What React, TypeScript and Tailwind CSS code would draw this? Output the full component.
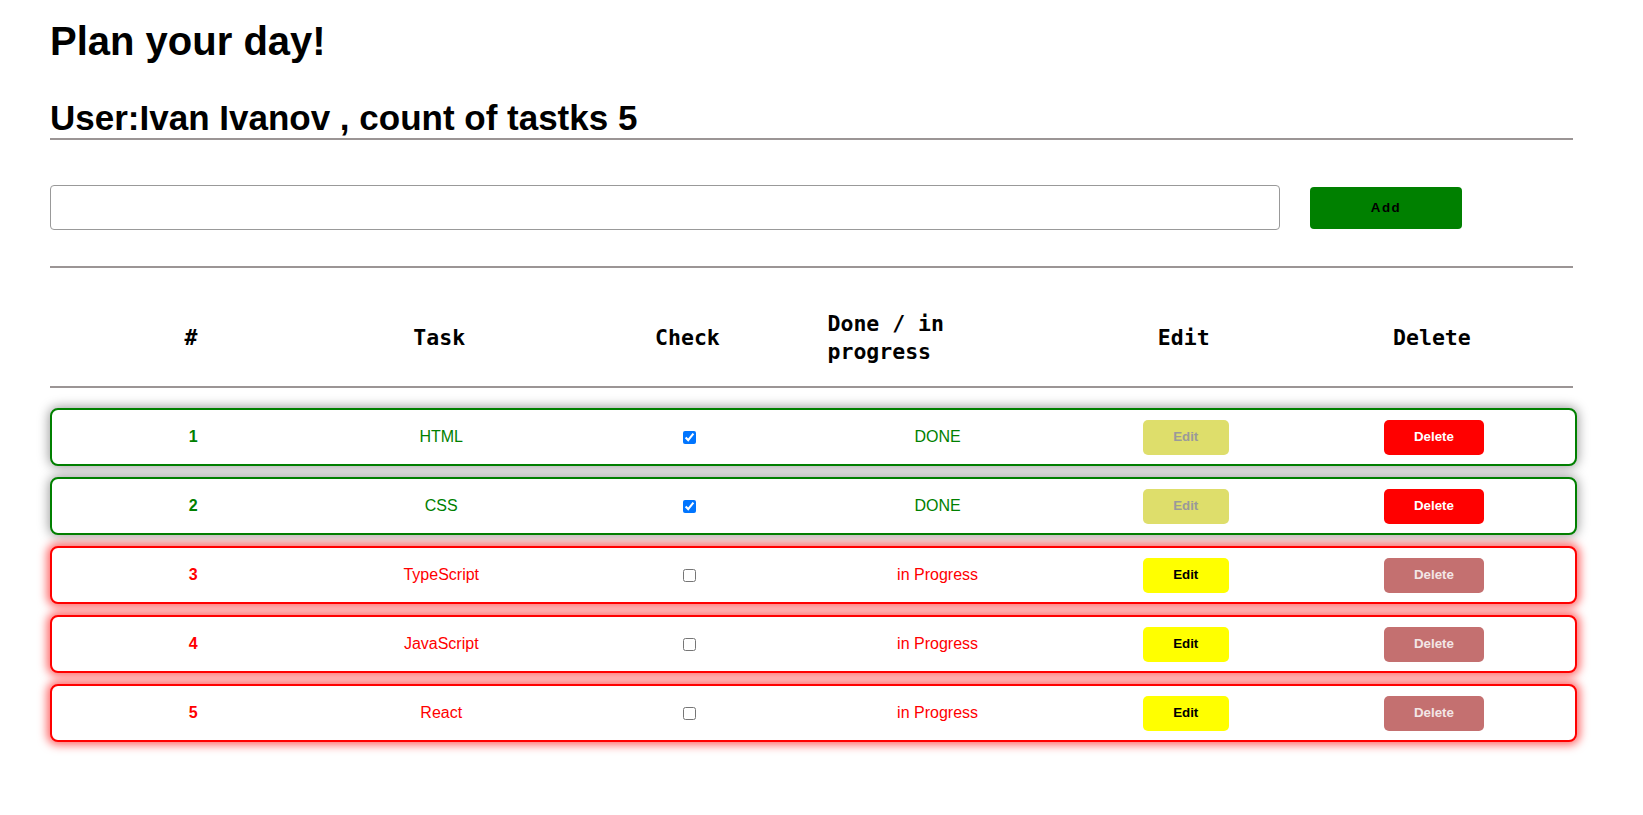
import { useState } from 'react';

type Task = { id: number; title: string; done: boolean };

const initialTasks: Task[] = [
  { id: 1, title: 'HTML', done: true },
  { id: 2, title: 'CSS', done: true },
  { id: 3, title: 'TypeScript', done: false },
  { id: 4, title: 'JavaScript', done: false },
  { id: 5, title: 'React', done: false },
];

function TaskRow({ task, onToggle }: { task: Task; onToggle: () => void }) {
  const done = task.done;
  return (
    <div
      className={
        done
          ? 'grid grid-cols-6 items-center w-[1527px] h-[58px] pl-[17px] pr-[17px] bg-white rounded-lg border-2 border-[#008000] text-[#008000] shadow-[0_0_12px_1px_rgba(0,0,0,0.4)]'
          : 'grid grid-cols-6 items-center w-[1527px] h-[58px] pl-[17px] pr-[17px] bg-white rounded-lg border-2 border-[#ff0000] text-[#ff0000] shadow-[0_0_10px_3px_rgba(255,0,0,0.6)]'
      }
    >
      <div className="text-center text-[16px] font-bold">{task.id}</div>
      <div className="text-center text-[16px]">{task.title}</div>
      <div className="flex justify-center">
        <input type="checkbox" checked={done} onChange={onToggle} className="w-[13px] h-[13px] m-0" />
      </div>
      <div className="text-center text-[16px]">{done ? 'DONE' : 'in Progress'}</div>
      <div className="flex justify-center">
        <button
          disabled={done}
          className={
            done
              ? 'w-[86px] h-[35px] rounded-[5px] bg-[#dede6b] text-[#9a9a9a] text-[13.33px] font-bold'
              : 'w-[86px] h-[35px] rounded-[5px] bg-[#ffff00] text-black text-[13.33px] font-bold'
          }
        >
          Edit
        </button>
      </div>
      <div className="flex justify-center">
        <button
          disabled={!done}
          className={
            done
              ? 'w-[100px] h-[35px] rounded-[5px] bg-[#ff0000] text-white text-[13.33px] font-bold'
              : 'w-[100px] h-[35px] rounded-[5px] bg-[#c47070] text-[#f3e6e6] text-[13.33px] font-bold'
          }
        >
          Delete
        </button>
      </div>
    </div>
  );
}

export default function App() {
  const [tasks, setTasks] = useState<Task[]>(initialTasks);
  const [text, setText] = useState('');

  const toggle = (id: number) =>
    setTasks((prev) => prev.map((t) => (t.id === id ? { ...t, done: !t.done } : t)));

  const add = () => {
    if (!text.trim()) return;
    setTasks((prev) => [...prev, { id: prev.length + 1, title: text.trim(), done: false }]);
    setText('');
  };

  return (
    <div className="min-h-screen bg-white font-['Liberation_Sans',Arial,sans-serif] text-black">
      <div className="w-[1573px] pl-[50px] pb-10">
        <h1 className="mt-[18px] text-[40px] leading-[46px] font-bold">Plan your day!</h1>
        <h2 className="mt-[34px] text-[35px] leading-[40px] font-bold border-b-2 border-[#9b9595]">
          User:Ivan Ivanov , count of tastks {tasks.length}
        </h2>

        <div className="mt-[45px] flex items-center gap-[30px]">
          <input
            value={text}
            onChange={(e) => setText(e.target.value)}
            className="w-[1230px] h-[45px] rounded-[4px] border border-[#999] px-2 outline-none"
          />
          <button
            onClick={add}
            className="w-[152px] h-[42px] rounded-[4px] bg-[#008000] text-black text-[13.33px] font-bold tracking-[1.5px]"
          >
            Add
          </button>
        </div>

        <div className="mt-[36px] border-t-2 border-[#9b9595]" />

        <div className="mt-[42px] mb-[20px] h-[56px] grid grid-cols-6 items-center px-[17px] font-['DejaVu_Sans_Mono',monospace] text-[21.5px] leading-[28px] font-bold">
          <div className="text-center">#</div>
          <div className="text-center">Task</div>
          <div className="text-center">Check</div>
          <div className="text-left pl-4 pr-8">Done / in progress</div>
          <div className="text-center">Edit</div>
          <div className="text-center">Delete</div>
        </div>

        <div className="border-t-2 border-[#9b9595]" />

        <div className="mt-[20px] flex flex-col gap-[11px]">
          {tasks.map((t) => (
            <TaskRow key={t.id} task={t} onToggle={() => toggle(t.id)} />
          ))}
        </div>
      </div>
    </div>
  );
}
